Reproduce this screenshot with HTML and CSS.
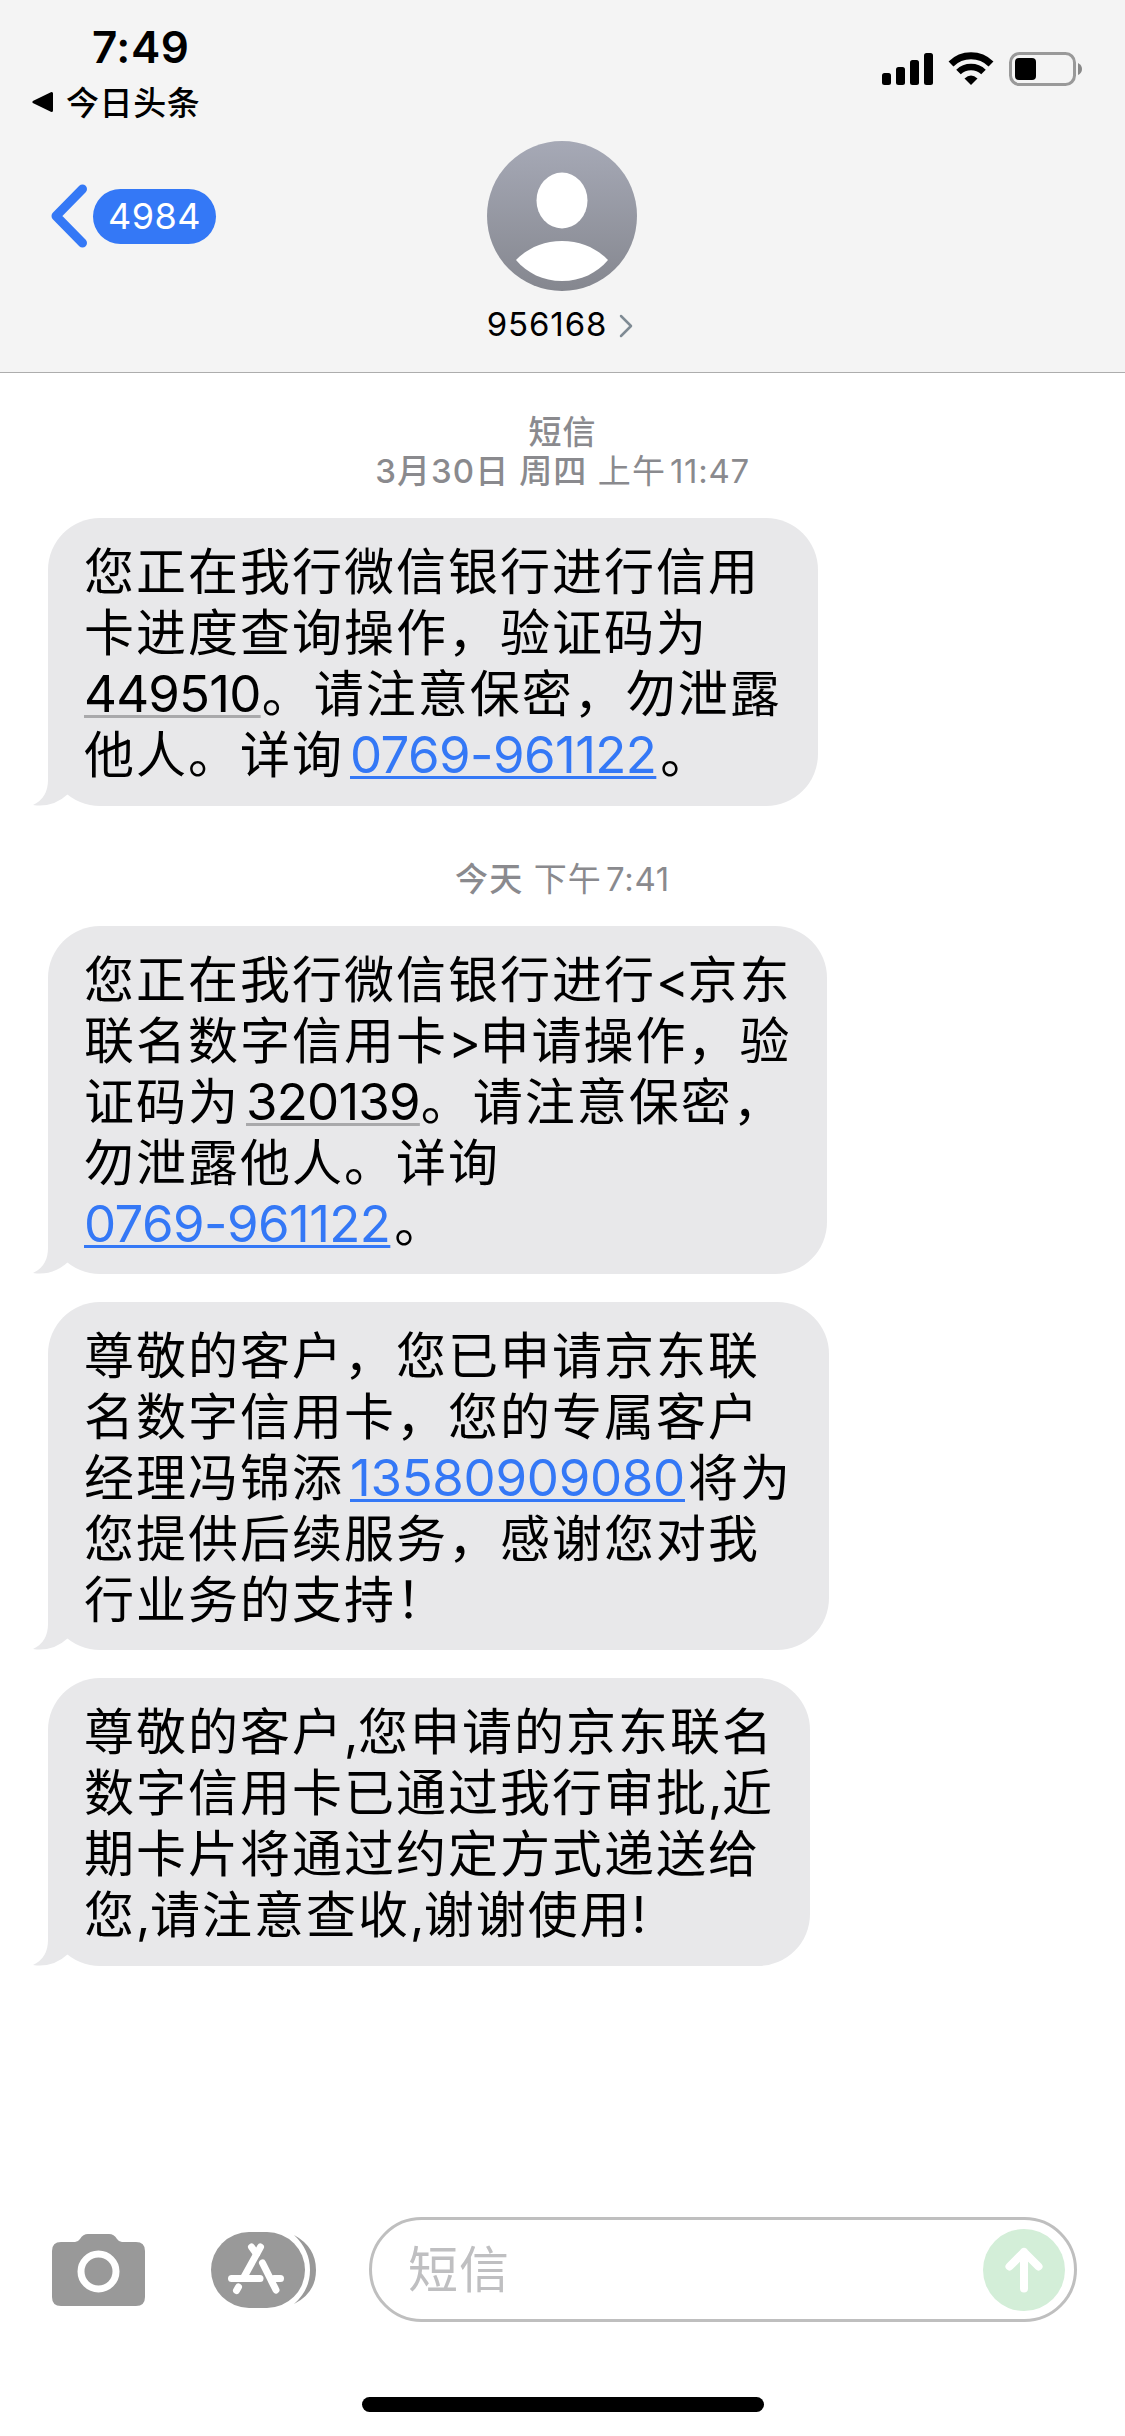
FILE: index.html
```html
<!DOCTYPE html>
<html lang="zh-CN">
<head>
<meta charset="utf-8">
<title>956168</title>
<link rel="stylesheet" href="styles.css">
</head>
<body>
<div class="screen">
  <header class="header">
    <div class="status">
      <div class="status-left">
        <div class="clock">7:49</div>
        <div class="return">
          <svg class="return-icon" width="22" height="22" viewBox="0 0 22 22"><path d="M2 11 L19.500 2.500 V19.500 Z" fill="#000" stroke="#000" stroke-width="3" stroke-linejoin="round"/></svg>
          <span>今日头条</span>
        </div>
      </div>
      <svg class="status-icons" width="202" height="36" viewBox="0 0 202 36">
        <rect x="0" y="22" width="9" height="12" rx="2.500"/>
        <rect x="14" y="16" width="9" height="18" rx="2.500"/>
        <rect x="28" y="9" width="9" height="25" rx="2.500"/>
        <rect x="42" y="2" width="9" height="32" rx="2.500"/>
        <g fill="none" stroke="#000">
          <path d="M69 13 A28.500 28.500 0 0 1 109 13" stroke-width="7"/>
          <path d="M76.500 21 A18 18 0 0 1 101.500 21" stroke-width="6.500"/>
        </g>
        <path d="M82.500 27.500 Q89 21.500 95.500 27.500 L89 34 Z"/>
        <rect x="128.500" y="2.500" width="64" height="31" rx="9" fill="none" stroke="#999" stroke-width="3"/>
        <rect x="133" y="7" width="21" height="22" rx="4"/>
        <path d="M196 12 Q200 14 200 18 T196 24 Z" fill="#888"/>
      </svg>
    </div>
    <div class="nav">
      <div class="back">
        <svg width="38" height="64" viewBox="0 0 38 64"><path d="M33.500 5 L7 32 L33.500 59" fill="none" stroke="#3478f6" stroke-width="9" stroke-linecap="round" stroke-linejoin="round"/></svg>
        <span class="badge">4984</span>
      </div>
      <div class="contact">
        <svg width="150" height="150" viewBox="0 0 150 150">
          <defs><linearGradient id="avatar" x1="0" y1="0" x2="0" y2="1"><stop offset="0" stop-color="#a6a9b6"/><stop offset="1" stop-color="#85878f"/></linearGradient></defs>
          <circle cx="75" cy="75" r="75" fill="url(#avatar)"/>
          <ellipse cx="75" cy="59.500" rx="25.500" ry="28" fill="#fff"/>
          <path d="M29 119 C41 107 56 100 75 100 S109 107 121 119 C110 132 94 140 75 140 S40 132 29 119Z" fill="#fff"/>
        </svg>
        <div class="name"><span>956168</span><svg width="14" height="24" viewBox="0 0 14 24"><path d="M2 2 L12 12 L2 22" fill="none" stroke="#7f8b94" stroke-width="2.500" stroke-linecap="round" stroke-linejoin="round"/></svg></div>
      </div>
      <div class="nav-end"></div>
    </div>
  </header>

  <main class="thread">
    <div class="stamp first"><div class="strong">短信</div><div><span class="strong">3月30日 周四</span> 上午<span class="time">11:47</span></div></div>
    <div class="bubble b1">
      <div>您正在我行微信银行进行信用</div>
      <div>卡进度查询操作，验证码为</div>
      <div><span class="code">449510</span>。请注意保密，勿泄露</div>
      <div>他人。详询<a class="tel mid">0769-961122</a>。</div>
      <svg class="tail" width="40" height="52" viewBox="0 0 40 52"><path d="M15 0 V26 Q15 44 0 51 Q20 54 35 40 L40 0Z" fill="#e8e8ea"/></svg>
    </div>
    <div class="stamp second"><span class="strong">今天</span> 下午<span class="time">7:41</span></div>
    <div class="bubble b2">
      <div>您正在我行微信银行进行<span class="angle">&lt;</span>京东</div>
      <div>联名数字信用卡<span class="angle">&gt;</span>申请操作，验</div>
      <div>证码为<span class="code mid">320139</span>。请注意保密，</div>
      <div>勿泄露他人。详询</div>
      <div><a class="tel">0769-961122</a>。</div>
      <svg class="tail" width="40" height="52" viewBox="0 0 40 52"><path d="M15 0 V26 Q15 44 0 51 Q20 54 35 40 L40 0Z" fill="#e8e8ea"/></svg>
    </div>
    <div class="bubble b3">
      <div>尊敬的客户，您已申请京东联</div>
      <div>名数字信用卡，您的专属客户</div>
      <div>经理冯锦添<a class="tel mobile mid">13580909080</a>将为</div>
      <div>您提供后续服务，感谢您对我</div>
      <div>行业务的支持！</div>
      <svg class="tail" width="40" height="52" viewBox="0 0 40 52"><path d="M15 0 V26 Q15 44 0 51 Q20 54 35 40 L40 0Z" fill="#e8e8ea"/></svg>
    </div>
    <div class="bubble b4">
      <div>尊敬的客户<span class="comma">,</span>您申请的京东联名</div>
      <div>数字信用卡已通过我行审批<span class="comma">,</span>近</div>
      <div>期卡片将通过约定方式递送给</div>
      <div>您<span class="comma">,</span>请注意查收<span class="comma">,</span>谢谢使用!</div>
      <svg class="tail" width="40" height="52" viewBox="0 0 40 52"><path d="M15 0 V26 Q15 44 0 51 Q20 54 35 40 L40 0Z" fill="#e8e8ea"/></svg>
    </div>
  </main>

  <footer class="composer">
    <svg class="camera" width="93" height="72" viewBox="0 0 93 72">
      <path d="M9 8 H23 Q26 8 28 5 Q31 0 36 0 H57 Q62 0 65 5 Q67 8 70 8 H84 Q93 8 93 17 V63 Q93 72 84 72 H9 Q0 72 0 63 V17 Q0 8 9 8Z" fill="#999"/>
      <circle cx="46.500" cy="37.500" r="17.500" fill="none" stroke="#fff" stroke-width="7"/>
    </svg>
    <svg class="apps" width="105" height="76" viewBox="0 0 105 76">
      <path d="M38 0 H56 A38 38 0 0 1 56 76 H38 A38 38 0 0 1 38 0Z" fill="#999"/>
      <path d="M83 3 Q105 15 105 38 T83 72 Q99 58 99 38 T83 3Z" fill="#999"/>
      <g stroke="#fff" stroke-width="7" stroke-linecap="round" fill="none">
        <path d="M49.500 15 L33 45"/><path d="M40.500 15 L45.500 22"/>
        <path d="M20.500 46.500 H49"/><path d="M63 46.500 H69.500"/>
        <path d="M51.500 31 L65 58"/><path d="M27.500 55 L25.500 58.500"/>
      </g>
    </svg>
    <div class="field">
      <span>短信</span>
      <svg width="82" height="82" viewBox="0 0 82 82"><circle cx="41" cy="41" r="41" fill="#d3eed8"/><path d="M41 59.500 V23 M26.500 37.500 L41 23 L55.500 37.500" fill="none" stroke="#fff" stroke-width="8" stroke-linecap="round" stroke-linejoin="round"/></svg>
    </div>
  </footer>
  <div class="home"></div>
</div>
</body>
</html>
```
FILE: styles.css
```css
* { box-sizing: border-box; }
body { margin: 0; background: #fff; color: #000; font-family: "Inter", "Noto Sans CJK SC", sans-serif; }
svg { display: block; flex: none; }
.screen { width: 1125px; height: 2436px; display: flex; flex-direction: column; background: #fff; overflow: hidden; }

.header { height: 373px; background: #f4f4f4; border-bottom: 1px solid #adadad; }
.status { height: 141px; display: flex; justify-content: space-between; padding: 20px 41px 0 32px; }
.clock { margin-left: 60px; font-size: 44px; line-height: 54px; font-weight: 600; letter-spacing: 0.5px; }
.return { display: flex; align-items: center; gap: 12px; height: 54px; font-family: "Noto Sans CJK SC", sans-serif; font-size: 33px; font-weight: 500; letter-spacing: 0.6px; }
.return-icon { margin-top: 2px; }
.status-icons { margin-top: 31px; }
.nav { display: grid; grid-template-columns: 1fr auto 1fr; padding: 0 49px; }
.back { display: flex; align-items: center; gap: 6px; height: 150px; }
.badge { width: 123px; height: 55px; border-radius: 28px; background: #3478f6; color: #fff; font-size: 36px; line-height: 55px; font-weight: 400; letter-spacing: 0.5px; text-align: center; }
.contact { display: flex; flex-direction: column; align-items: center; }
.name { display: flex; align-items: center; gap: 12px; height: 70px; margin: -2px 5px 0 0; font-size: 33px; letter-spacing: 0.9px; }
.name svg { margin-top: 4px; }

.thread { flex: 1; display: flex; flex-direction: column; align-items: flex-start; }
.stamp { align-self: stretch; text-align: center; font-size: 33px; line-height: 39px; color: #8a8a8e; letter-spacing: 1.1px; white-space: nowrap; }
.stamp.first { height: 145px; padding-top: 40px; }
.stamp.second { height: 120px; padding-top: 54px; }
.strong { font-weight: 500; }
.time { letter-spacing: 0.7px; margin-left: 4px; }
.bubble { position: relative; margin-left: 48px; padding: 24px 36px 0; border-radius: 52px; background: #e8e8ea; font-size: 50px; line-height: 60.9px; letter-spacing: 2px; white-space: nowrap; }
.b1 { width: 770px; height: 288px; }
.b2 { width: 779px; height: 348px; }
.b3 { width: 781px; height: 348px; margin-top: 28px; }
.b4 { width: 762px; height: 288px; margin-top: 28px; }
.tail { position: absolute; left: -15px; bottom: 0; }
.code, .tel { font-size: 51px; letter-spacing: -0.8px; text-decoration: underline; text-decoration-thickness: 3px; text-underline-offset: 3px; text-decoration-skip-ink: none; }
.code { margin-right: 1px; text-decoration-color: #a9a9ab; }
.tel { margin-right: 4px; color: #3478f6; letter-spacing: -0.6px; }
.tel.mobile { margin-right: 3px; letter-spacing: -0.3px; }
.mid { margin-left: 6px; }
.angle { letter-spacing: -1.5px; }
.comma { letter-spacing: -0.5px; }

.composer { height: 105px; display: flex; align-items: center; padding: 0 48px 0 52px; }
.apps { margin-left: 66px; }
.field { width: 708px; height: 105px; margin-left: 53px; padding: 0 9px 0 36px; display: flex; align-items: center; justify-content: space-between; border: 3px solid #bfbfbf; border-radius: 53px; color: #bfbfc1; font-size: 50px; line-height: 60px; letter-spacing: 1px; }
.home { align-self: center; width: 402px; height: 15px; margin: 75px 0 24px; border-radius: 8px; background: #000; }
```
